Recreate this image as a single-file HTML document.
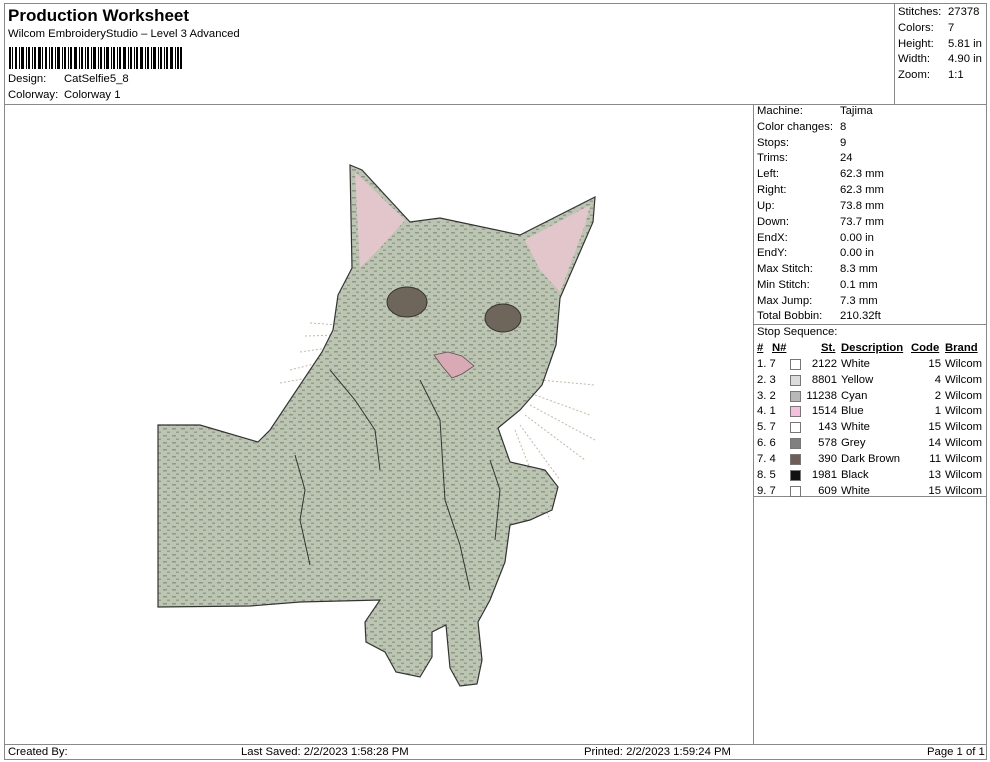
<!DOCTYPE html>
<html><head><style>
body{margin:0;width:990px;height:762px;background:#fff;font-family:"Liberation Sans",Arial,sans-serif;font-size:11.3px;color:#000;position:relative;overflow:hidden}
.a{position:absolute;white-space:nowrap;line-height:13px}
.ln{position:absolute;background:#888}
.sw{position:absolute;width:9px;height:9px;border:1px solid #777}
.r{text-align:right}
u{text-decoration:underline}
</style></head><body>
<div class="ln" style="left:4px;top:3px;width:983px;height:1px"></div>
<div class="ln" style="left:4px;top:3px;width:1px;height:757px"></div>
<div class="ln" style="left:986px;top:3px;width:1px;height:757px"></div>
<div class="ln" style="left:4px;top:104px;width:983px;height:1px"></div>
<div class="ln" style="left:894px;top:3px;width:1px;height:101px"></div>
<div class="ln" style="left:753px;top:104px;width:1px;height:640px"></div>
<div class="ln" style="left:753px;top:324px;width:234px;height:1px"></div>
<div class="ln" style="left:753px;top:496px;width:234px;height:1px"></div>
<div class="ln" style="left:4px;top:744px;width:983px;height:1px"></div>
<div class="ln" style="left:4px;top:759px;width:983px;height:1px"></div>

<div class="a" style="left:8px;top:6px;font-size:17px;font-weight:bold;line-height:20px">Production Worksheet</div>
<div class="a" style="left:8px;top:28px">Wilcom EmbroideryStudio – Level 3 Advanced</div>
<svg style="position:absolute;left:9px;top:47px" width="173" height="22">
<g fill="#000">
<rect x="0" width="2" height="22"/><rect x="3" width="1" height="22"/><rect x="6" width="2" height="22"/><rect x="10" width="1" height="22"/><rect x="12" width="3" height="22"/><rect x="17" width="1" height="22"/><rect x="19" width="2" height="22"/><rect x="23" width="1" height="22"/><rect x="25" width="2" height="22"/><rect x="29" width="3" height="22"/><rect x="33" width="1" height="22"/><rect x="36" width="2" height="22"/><rect x="40" width="1" height="22"/><rect x="42" width="2" height="22"/><rect x="46" width="1" height="22"/><rect x="48" width="3" height="22"/><rect x="53" width="1" height="22"/><rect x="55" width="2" height="22"/><rect x="59" width="1" height="22"/><rect x="61" width="2" height="22"/><rect x="65" width="3" height="22"/><rect x="70" width="1" height="22"/><rect x="72" width="2" height="22"/><rect x="76" width="1" height="22"/><rect x="78" width="2" height="22"/><rect x="82" width="1" height="22"/><rect x="84" width="3" height="22"/><rect x="89" width="1" height="22"/><rect x="91" width="2" height="22"/><rect x="95" width="1" height="22"/><rect x="97" width="3" height="22"/><rect x="102" width="1" height="22"/><rect x="104" width="2" height="22"/><rect x="108" width="1" height="22"/><rect x="110" width="2" height="22"/><rect x="114" width="3" height="22"/><rect x="119" width="1" height="22"/><rect x="121" width="2" height="22"/><rect x="125" width="1" height="22"/><rect x="127" width="2" height="22"/><rect x="131" width="3" height="22"/><rect x="136" width="1" height="22"/><rect x="138" width="2" height="22"/><rect x="142" width="1" height="22"/><rect x="144" width="3" height="22"/><rect x="149" width="1" height="22"/><rect x="151" width="2" height="22"/><rect x="155" width="1" height="22"/><rect x="157" width="2" height="22"/><rect x="161" width="3" height="22"/><rect x="166" width="1" height="22"/><rect x="168" width="2" height="22"/><rect x="171" width="2" height="22"/>
</g></svg>
<div class="a" style="left:8px;top:73px">Design:</div><div class="a" style="left:64px;top:73px">CatSelfie5_8</div>
<div class="a" style="left:8px;top:89px">Colorway:</div><div class="a" style="left:64px;top:89px">Colorway 1</div>

<div class="a" style="left:898px;top:6px">Stitches:</div><div class="a" style="left:948px;top:6px">27378</div>
<div class="a" style="left:898px;top:22px">Colors:</div><div class="a" style="left:948px;top:22px">7</div>
<div class="a" style="left:898px;top:38px">Height:</div><div class="a" style="left:948px;top:38px">5.81 in</div>
<div class="a" style="left:898px;top:53px">Width:</div><div class="a" style="left:948px;top:53px">4.90 in</div>
<div class="a" style="left:898px;top:69px">Zoom:</div><div class="a" style="left:948px;top:69px">1:1</div>

<div style="position:absolute;left:757px;top:105px">
<div class="a" style="top:0">Machine:</div><div class="a" style="left:83px;top:0">Tajima</div>
<div class="a" style="top:16px">Color changes:</div><div class="a" style="left:83px;top:16px">8</div>
<div class="a" style="top:32px">Stops:</div><div class="a" style="left:83px;top:32px">9</div>
<div class="a" style="top:47px">Trims:</div><div class="a" style="left:83px;top:47px">24</div>
<div class="a" style="top:63px">Left:</div><div class="a" style="left:83px;top:63px">62.3 mm</div>
<div class="a" style="top:79px">Right:</div><div class="a" style="left:83px;top:79px">62.3 mm</div>
<div class="a" style="top:95px">Up:</div><div class="a" style="left:83px;top:95px">73.8 mm</div>
<div class="a" style="top:111px">Down:</div><div class="a" style="left:83px;top:111px">73.7 mm</div>
<div class="a" style="top:127px">EndX:</div><div class="a" style="left:83px;top:127px">0.00 in</div>
<div class="a" style="top:142px">EndY:</div><div class="a" style="left:83px;top:142px">0.00 in</div>
<div class="a" style="top:158px">Max Stitch:</div><div class="a" style="left:83px;top:158px">8.3 mm</div>
<div class="a" style="top:174px">Min Stitch:</div><div class="a" style="left:83px;top:174px">0.1 mm</div>
<div class="a" style="top:190px">Max Jump:</div><div class="a" style="left:83px;top:190px">7.3 mm</div>
<div class="a" style="top:205px">Total Bobbin:</div><div class="a" style="left:83px;top:205px">210.32ft</div>
<div class="a" style="top:221px">Stop Sequence:</div>
<div class="a" style="top:237px;font-weight:bold"><u>#</u></div>
<div class="a" style="left:15px;top:237px;font-weight:bold"><u>N#</u></div>
<div class="a" style="left:64px;top:237px;font-weight:bold"><u>St.</u></div>
<div class="a" style="left:84px;top:237px;font-weight:bold"><u>Description</u></div>
<div class="a" style="left:154px;top:237px;font-weight:bold"><u>Code</u></div>
<div class="a" style="left:188px;top:237px;font-weight:bold"><u>Brand</u></div>
</div>

<div style="position:absolute;left:757px;top:358px">
<div style="position:absolute;top:0"><div class="a">1. 7</div><div class="sw" style="left:33px;top:1px;background:#fff"></div><div class="a r" style="left:40px;width:40px">2122</div><div class="a" style="left:84px">White</div><div class="a r" style="left:150px;width:34px">15</div><div class="a" style="left:188px">Wilcom</div></div>
<div style="position:absolute;top:16px"><div class="a">2. 3</div><div class="sw" style="left:33px;top:1px;background:#dcdcdc"></div><div class="a r" style="left:40px;width:40px">8801</div><div class="a" style="left:84px">Yellow</div><div class="a r" style="left:150px;width:34px">4</div><div class="a" style="left:188px">Wilcom</div></div>
<div style="position:absolute;top:32px"><div class="a">3. 2</div><div class="sw" style="left:33px;top:1px;background:#b8b8b8"></div><div class="a r" style="left:40px;width:40px">11238</div><div class="a" style="left:84px">Cyan</div><div class="a r" style="left:150px;width:34px">2</div><div class="a" style="left:188px">Wilcom</div></div>
<div style="position:absolute;top:47px"><div class="a">4. 1</div><div class="sw" style="left:33px;top:1px;background:#f5c0dc"></div><div class="a r" style="left:40px;width:40px">1514</div><div class="a" style="left:84px">Blue</div><div class="a r" style="left:150px;width:34px">1</div><div class="a" style="left:188px">Wilcom</div></div>
<div style="position:absolute;top:63px"><div class="a">5. 7</div><div class="sw" style="left:33px;top:1px;background:#fff"></div><div class="a r" style="left:40px;width:40px">143</div><div class="a" style="left:84px">White</div><div class="a r" style="left:150px;width:34px">15</div><div class="a" style="left:188px">Wilcom</div></div>
<div style="position:absolute;top:79px"><div class="a">6. 6</div><div class="sw" style="left:33px;top:1px;background:#808080"></div><div class="a r" style="left:40px;width:40px">578</div><div class="a" style="left:84px">Grey</div><div class="a r" style="left:150px;width:34px">14</div><div class="a" style="left:188px">Wilcom</div></div>
<div style="position:absolute;top:95px"><div class="a">7. 4</div><div class="sw" style="left:33px;top:1px;background:#6e5e58"></div><div class="a r" style="left:40px;width:40px">390</div><div class="a" style="left:84px">Dark Brown</div><div class="a r" style="left:150px;width:34px">11</div><div class="a" style="left:188px">Wilcom</div></div>
<div style="position:absolute;top:111px"><div class="a">8. 5</div><div class="sw" style="left:33px;top:1px;background:#111"></div><div class="a r" style="left:40px;width:40px">1981</div><div class="a" style="left:84px">Black</div><div class="a r" style="left:150px;width:34px">13</div><div class="a" style="left:188px">Wilcom</div></div>
<div style="position:absolute;top:127px"><div class="a">9. 7</div><div class="sw" style="left:33px;top:1px;background:#fff"></div><div class="a r" style="left:40px;width:40px">609</div><div class="a" style="left:84px">White</div><div class="a r" style="left:150px;width:34px">15</div><div class="a" style="left:188px">Wilcom</div></div>
</div>

<svg style="position:absolute;left:0;top:0" width="750" height="740">
<defs>
<pattern id="p" width="9" height="7" patternUnits="userSpaceOnUse">
<rect width="9" height="7" fill="#bcc5b2"/>
<rect x="1" y="1" width="4" height="1.5" fill="#8e9886"/>
<rect x="5" y="4.5" width="3" height="1.5" fill="#949e8c"/>
</pattern>
</defs>
<g stroke="#c8b8a0" stroke-width="1" stroke-dasharray="2 2" fill="none">
<path d="M310 323 L340 325 M305 336 L338 335 M300 352 L335 347 M290 370 L330 360 M280 383 L325 375 M540 380 L595 385 M535 395 L590 415 M530 405 L595 440 M525 415 L585 460 M520 425 L560 480 M515 430 L550 520"/>
</g>
<path fill="url(#p)" stroke="#333" stroke-width="1.2" d="M158 425 L200 425 L258 442 L270 430 L300 385 L322 352 L333 330 L338 295 L352 268 L350 165 L362 170 L410 222 L440 218 L520 235 L595 197 L593 222 L560 298 L556 345 L542 385 L520 410 L498 428 L510 462 L545 470 L558 487 L552 510 L530 520 L510 525 L505 562 L490 600 L478 622 L482 660 L477 684 L460 686 L450 668 L446 625 L432 632 L432 657 L420 677 L396 672 L385 652 L366 642 L365 622 L380 600 L300 602 L250 606 L158 607 Z"/>
<path fill="#e3c6cc" d="M355 172 L405 220 L380 248 L360 268 Z M590 205 L585 225 L560 292 L540 270 L525 240 Z"/>
<path fill="#d9aab5" stroke="#555" stroke-width="0.8" d="M434 355 L448 352 L462 356 L474 366 L462 374 L452 378 L442 366 Z"/>
<ellipse cx="407" cy="302" rx="20" ry="15" fill="#6e665a" stroke="#333"/>
<ellipse cx="503" cy="318" rx="18" ry="14" fill="#6e665a" stroke="#333"/>
<g fill="none" stroke="#333" stroke-width="1">
<path d="M295 455 L305 490 L300 520 L310 565 M330 370 L355 400 L375 430 L380 470 M420 380 L440 420 L445 500 L460 545 L470 590 M490 460 L500 490 L495 540"/>
</g>
</svg>

<div class="a" style="left:8px;top:746px">Created By:</div>
<div class="a" style="left:241px;top:746px">Last Saved: 2/2/2023 1:58:28 PM</div>
<div class="a" style="left:584px;top:746px">Printed: 2/2/2023 1:59:24 PM</div>
<div class="a" style="left:927px;top:746px">Page 1 of 1</div>
</body></html>
